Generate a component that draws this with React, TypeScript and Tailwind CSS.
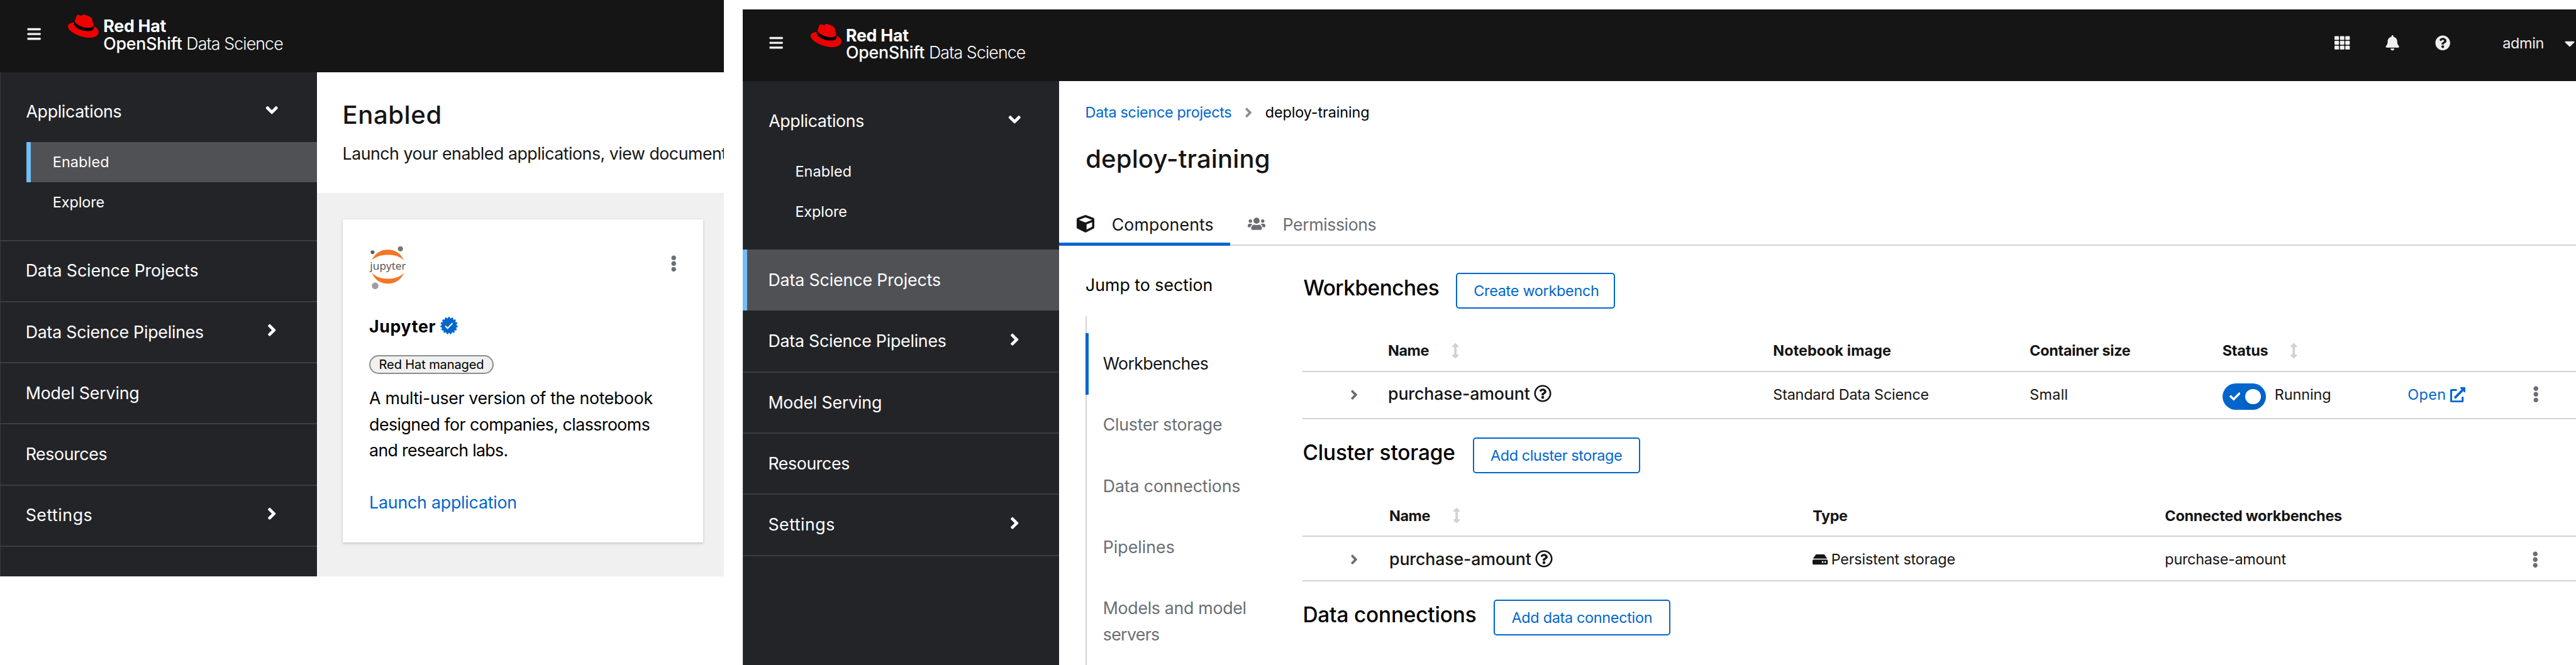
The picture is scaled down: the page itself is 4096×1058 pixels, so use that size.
import type { ReactNode } from "react";
import {
  FaAngleDown,
  FaAngleRight,
  FaArrowsAltV,
  FaBars,
  FaBell,
  FaCaretDown,
  FaCheck,
  FaCube,
  FaEllipsisV,
  FaExternalLinkAlt,
  FaHdd,
  FaQuestionCircle,
  FaRegQuestionCircle,
  FaTh,
  FaUsers,
} from "react-icons/fa";

/* ---------- Brand drawings ---------- */

function Fedora() {
  return (
    <svg viewBox="0 62 512 388" className="h-[37px] w-[48.9px] shrink-0">
      <path
        fill="#000"
        d="M429 254.84c4.65 22 4.65 24.35 4.65 27.25 0 37.66-42.33 58.56-98 58.56-125.74.08-235.91-73.65-235.91-122.33a49.55 49.55 0 0 1 4.06-19.72L113 178l311 60z"
      />
      <path
        fill="#e00"
        d="M341.52 285.56c33.65 0 82.34-6.94 82.34-47 .22-6.74.86-1.82-20.88-96.24-4.62-19.15-8.68-27.84-42.31-44.65-26.09-13.34-82.92-35.37-99.73-35.37-15.66 0-20.2 20.17-38.87 20.17-18 0-31.31-15.06-48.12-15.06-16.14 0-26.66 11-34.78 33.62-27.5 77.55-26.28 74.27-26.12 78.27 0 24.8 97.64 106.11 228.47 106.11M429 254.84c4.65 22 4.65 24.35 4.65 27.25 0 37.66-42.33 58.56-98 58.56-125.74.08-235.91-73.65-235.91-122.33a49.55 49.55 0 0 1 4.06-19.72C58.56 200.86 0 208.93 0 260.63c0 84.67 200.63 189 359.49 189 121.79 0 152.51-55.08 152.51-98.57 0-34.21-29.59-73.05-82.93-96.24"
      />
    </svg>
  );
}

function JupyterLogo() {
  return (
    <svg viewBox="0 0 70 80" className="h-[69.5px] w-[60.8px] overflow-visible">
      <path fill="#f37726" d="M5 27C10 14 21 7.3 34.3 7.3S58.5 14 63.5 27C57 19.5 46 16.8 34.3 16.8S12 19.5 5 27Z" />
      <path fill="#f37726" d="M5 49.4C10 62.4 21 69.4 34.3 69.4S58.5 62.4 63.5 49.4C57 57 46 60.3 34.3 60.3S12 57 5 49.4Z" />
      <circle cx="6.2" cy="11.9" r="3.5" fill="#616262" />
      <circle cx="57.2" cy="5.6" r="4.8" fill="#767677" />
      <circle cx="11" cy="73.4" r="6.1" fill="#9e9e9e" />
      <text
        x="1.6"
        y="43.7"
        fontSize="19"
        textLength="66"
        lengthAdjust="spacingAndGlyphs"
        fill="#4e4e4e"
        fontFamily="Open Sans, sans-serif"
      >
        jupyter
      </text>
    </svg>
  );
}

const BADGE_TEETH = 15;
const badgePoints = Array.from({ length: BADGE_TEETH * 4 }, (_, i) => {
  const radius = i % 4 < 2 ? 15.4 : 12.9;
  const angle = ((i - 0.5) / (BADGE_TEETH * 4)) * Math.PI * 2 - Math.PI / 2;
  return `${16 + radius * Math.cos(angle)},${16 + radius * Math.sin(angle)}`;
}).join(" ");

function VerifiedBadge() {
  return (
    <svg viewBox="0 0 32 32" className="mb-[3px] size-[28px] shrink-0">
      <polygon points={badgePoints} fill="#06c" stroke="#06c" strokeWidth="1" strokeLinejoin="round" />
      <path d="M9.2 16.6l4.2 4.2 8.8-9.2" fill="none" stroke="#fff" strokeWidth="2.4" />
    </svg>
  );
}

function BrandHeader({ children }: { children?: ReactNode }) {
  return (
    <div className="flex h-full items-start overflow-hidden bg-[#151515] pl-[41.7px] text-[#f0f0f0]">
      <FaBars className="mt-[41.6px] text-[24.3px]" />
      <div className="ml-[42px] mt-[22.8px]">
        <Fedora />
      </div>
      <div className="ml-[7.4px] pt-[27.9px] text-[26.75px] leading-[27.7px] text-white">
        <div className="font-bold tracking-[-0.0103em]">Red Hat</div>
        <div className="flex">
          <span className="w-[132px] font-medium tracking-[-0.0081em]">OpenShift</span>
          <span className="font-light tracking-[-0.0329em]">Data Science</span>
        </div>
      </div>
      {children}
    </div>
  );
}

/* ---------- Sidebar ---------- */

function SubItem({ active, children }: { active?: boolean; children: ReactNode }) {
  return (
    <div
      className={
        "ml-[41.7px] flex h-[64.25px] items-center pl-[42px] text-[23.4px] " +
        (active ? "bg-[#505155] shadow-[inset_7px_0_0_#73bcf7]" : "")
      }
    >
      {children}
    </div>
  );
}

function NavItem({ state, arrow, children }: { state?: "active" | "plain"; arrow?: boolean; children: ReactNode }) {
  const look =
    state === "active"
      ? "bg-[#505155] shadow-[inset_7px_0_0_#73bcf7]"
      : state === "plain"
        ? ""
        : "shadow-[inset_0_2px_0_#3c3d42]";
  return (
    <div className={"flex h-[97.23px] items-center justify-between pl-[40.7px] pr-[56px] text-[26.75px] " + look}>
      {children}
      {arrow && <FaAngleRight className="mb-[4px] text-[30.5px]" />}
    </div>
  );
}

function Sidebar({ page }: { page: "enabled" | "projects" }) {
  const onProjects = page === "projects";
  return (
    <nav className="w-[503.5px] shrink-0 whitespace-nowrap bg-[#232428] pt-[13.9px] text-white shadow-[inset_1px_0_0_#38393d]">
      <div className="flex h-[97.2px] items-center justify-between pl-[41.5px] pr-[56px] text-[26.75px]">
        <span className="tracking-[-0.0127em]">Applications</span>
        <FaAngleDown className="mb-[3px] text-[30.5px]" />
      </div>
      <SubItem active={!onProjects}>
        <span className="tracking-[0.0059em]">Enabled</span>
      </SubItem>
      <SubItem>
        <span className="tracking-[-0.0028em]">Explore</span>
      </SubItem>
      <div className="h-[27.6px]" />
      <NavItem state={onProjects ? "active" : undefined}>
        <span className="tracking-[-0.0044em]">Data Science Projects</span>
      </NavItem>
      <NavItem arrow state={onProjects ? "plain" : undefined}>
        <span className="tracking-[-0.0088em]">Data Science Pipelines</span>
      </NavItem>
      <NavItem>
        <span className="tracking-[-0.0066em]">Model Serving</span>
      </NavItem>
      <NavItem>
        <span className="tracking-[-0.0147em]">Resources</span>
      </NavItem>
      <NavItem arrow>
        <span className="tracking-[0.0193em]">Settings</span>
      </NavItem>
      <div className="h-[2px] bg-[#3c3d42]" />
    </nav>
  );
}

/* ---------- Enabled applications window ---------- */

function JupyterCard() {
  return (
    <article className="flex h-[514.3px] w-[573px] flex-col items-start whitespace-nowrap bg-white pl-[42px] pr-[33.5px] pt-[42px] text-black shadow-[0_2px_4px_rgba(3,3,3,0.14),0_0_4px_rgba(3,3,3,0.08)]">
      <div className="flex w-full items-start justify-between">
        <JupyterLogo />
        <FaEllipsisV className="mt-[15.4px] text-[26.5px] text-[#6a6e73]" />
      </div>
      <div className="mt-[38.6px] flex h-[41.7px] items-center gap-[7px] text-[26.75px] font-bold">
        <span className="tracking-[0.023em]">Jupyter</span>
        <VerifiedBadge />
      </div>
      <div className="mt-[24.5px] flex h-[30.5px] w-[198px] items-center rounded-full border-2 border-[#8a8d90] bg-[#f0f0f0] pl-[13.5px] text-[20.1px] tracking-[-0.0073em]">
        Red Hat managed
      </div>
      <div className="mt-[17.5px] text-[26.75px] leading-[41.67px]">
        <p className="tracking-[-0.0129em]">A multi-user version of the notebook</p>
        <p className="tracking-[-0.0206em]">designed for companies, classrooms</p>
        <p className="tracking-[-0.0261em]">and research labs.</p>
      </div>
      <a className="mt-[41.6px] text-[26.75px] leading-[41.67px] tracking-[-0.0083em] text-[#06c]">
        Launch application
      </a>
    </article>
  );
}

function EnabledWindow() {
  return (
    <section className="flex h-[916.8px] w-[1151px] shrink-0 flex-col overflow-hidden">
      <header className="h-[114.6px] shrink-0">
        <BrandHeader />
      </header>
      <div className="flex flex-1">
        <Sidebar page="enabled" />
        <main className="flex min-w-0 flex-1 flex-col bg-[#f0f0f0]">
          <div className="h-[192.7px] overflow-hidden whitespace-nowrap bg-white pl-[41px] pt-[41.4px] text-[#151515]">
            <h1 className="text-[40.1px] font-medium leading-[54px] tracking-[0.0144em]">Enabled</h1>
            <p className="mt-[14px] text-[26.75px] leading-[41.7px] tracking-[-0.0182em]">
              Launch your enabled applications, view document
            </p>
          </div>
          <div className="pl-[41.6px] pt-[41.3px]">
            <JupyterCard />
          </div>
        </main>
      </div>
    </section>
  );
}

/* ---------- Project details window ---------- */

function Toolbar() {
  return (
    <div className="-mr-[2.6px] ml-auto flex h-[107.6px] shrink-0 items-center text-[24.3px]">
      <FaTh />
      <FaBell className="ml-[55.6px]" />
      <FaQuestionCircle className="ml-[55.6px]" />
      <span className="ml-[82.8px] text-[23.4px] tracking-[-0.0137em]">admin</span>
      <FaCaretDown className="ml-[27.6px] text-[26px]" />
    </div>
  );
}

function JumpLink({ active, children }: { active?: boolean; children: ReactNode }) {
  return (
    <li
      className={
        "py-[27.8px] pl-[27.9px] " + (active ? "text-[#151515] shadow-[inset_5px_0_0_#06c]" : "text-[#6a6e73]")
      }
    >
      {children}
    </li>
  );
}

function JumpLinks() {
  return (
    <aside className="flex w-[345.5px] shrink-0 flex-col whitespace-nowrap pt-[41.6px] text-[26.75px] leading-[41.67px]">
      <h2 className="tracking-[-0.0002em] text-black">Jump to section</h2>
      <ul className="mt-[27.8px] flex-1 pt-[27.8px] shadow-[inset_2px_0_0_#d2d2d2]">
        <JumpLink active>
          <span className="tracking-[-0.0255em]">Workbenches</span>
        </JumpLink>
        <JumpLink>
          <span className="tracking-[-0.0095em]">Cluster storage</span>
        </JumpLink>
        <JumpLink>
          <span className="tracking-[-0.0052em]">Data connections</span>
        </JumpLink>
        <JumpLink>
          <span className="tracking-[-0.0001em]">Pipelines</span>
        </JumpLink>
        <JumpLink>
          <span className="block tracking-[-0.0117em]">Models and model</span>
          <span className="block tracking-[-0.0255em]">servers</span>
        </JumpLink>
      </ul>
    </aside>
  );
}

function SectionHeading({ title, action }: { title: ReactNode; action: ReactNode }) {
  return (
    <div className="flex h-[57.3px] items-start">
      <h2 className="text-[33.4px] font-medium leading-[49.6px] text-black">{title}</h2>
      <button className="flex h-full items-center justify-center whitespace-nowrap rounded-[5px] border-2 border-[#06c] text-[23.4px] text-[#06c]">
        {action}
      </button>
    </div>
  );
}

function SortIcon() {
  return <FaArrowsAltV className="text-[24.3px] text-[#d2d2d2]" />;
}

function RowToggle() {
  return (
    <div className="pl-[69.4px]">
      <FaAngleRight className="text-[24.3px] text-[#6a6e73]" />
    </div>
  );
}

function PurchaseName() {
  return (
    <div className="flex items-center gap-[6px] pb-[2.5px] text-[26.75px] font-medium tracking-[-0.0063em]">
      purchase-amount
      <FaRegQuestionCircle className="text-[28px]" />
    </div>
  );
}

function RunningSwitch() {
  return (
    <div className="flex h-[41.7px] w-[69.5px] items-center rounded-full bg-[#06c] pl-[11px]">
      <FaCheck className="text-[17.6px] text-white" />
      <span className="ml-[8.2px] size-[24.3px] rounded-full bg-white shadow-[0_7px_14px_rgba(3,3,3,0.14)]" />
    </div>
  );
}

const line = "shadow-[inset_0_-2px_0_#d2d2d2] ";
const workbenchCols =
  "grid grid-cols-[135.7px_612.3px_408px_306.3px_294.7px_191.1px_1fr] items-center whitespace-nowrap text-[23.4px] text-[#151515] ";
const storageCols =
  "grid grid-cols-[137.7px_673.3px_560px_575.2px_1fr] items-center whitespace-nowrap text-[23.4px] text-[#151515] ";

function WorkbenchTable() {
  return (
    <div>
      <div className={workbenchCols + line + "mt-[32.6px] h-[68.1px] font-bold"}>
        <span />
        <div className="flex items-center">
          <span className="w-[95px] tracking-[-0.019em]">Name</span>
          <SortIcon />
        </div>
        <span className="tracking-[0.002em]">Notebook image</span>
        <span className="tracking-[-0.014em]">Container size</span>
        <div className="flex items-center">
          <span className="w-[101px] tracking-[-0.0067em]">Status</span>
          <SortIcon />
        </div>
      </div>
      <div className={workbenchCols + line + "h-[75.4px] pb-[4px]"}>
        <RowToggle />
        <PurchaseName />
        <span className="tracking-[-0.0099em]">Standard Data Science</span>
        <span className="tracking-[0.0093em]">Small</span>
        <div className="flex items-center">
          <div className="mt-[6.8px]">
            <RunningSwitch />
          </div>
          <span className="ml-[13.6px] tracking-[-0.0038em]">Running</span>
        </div>
        <a className="flex items-center gap-[6.5px] text-[#06c]">
          <span className="tracking-[0.0145em]">Open</span>
          <FaExternalLinkAlt className="text-[24.3px]" />
        </a>
        <FaEllipsisV className="text-[26.5px] text-[#6a6e73]" />
      </div>
    </div>
  );
}

function StorageTable() {
  return (
    <div>
      <div className={storageCols + line + "mt-[32.9px] h-[68px] font-bold"}>
        <span />
        <div className="flex items-center">
          <span className="w-[95px] tracking-[-0.019em]">Name</span>
          <SortIcon />
        </div>
        <span className="tracking-[-0.0202em]">Type</span>
        <span className="tracking-[-0.011em]">Connected workbenches</span>
      </div>
      <div className={storageCols + line + "h-[71.1px]"}>
        <RowToggle />
        <PurchaseName />
        <div className="flex items-center gap-[5px]">
          <FaHdd className="text-[24.3px]" />
          <span className="tracking-[-0.0077em]">Persistent storage</span>
        </div>
        <span className="tracking-[-0.0119em]">purchase-amount</span>
        <FaEllipsisV className="text-[26.5px] text-[#6a6e73]" />
      </div>
    </div>
  );
}

function ProjectContent() {
  return (
    <div className="min-w-0 flex-1 pt-[42.6px]">
      <SectionHeading
        title={<span className="block w-[243.8px] pl-[1px] tracking-[-0.0152em]">Workbenches</span>}
        action={<span className="w-[249.3px] pl-[26px] text-left tracking-[-0.0117em]">Create workbench</span>}
      />
      <WorkbenchTable />
      <div className="mt-[28.7px]">
        <SectionHeading
          title={<span className="block w-[270.2px] tracking-[-0.0046em]">Cluster storage</span>}
          action={<span className="w-[262.2px] tracking-[-0.0167em]">Add cluster storage</span>}
        />
      </div>
      <StorageTable />
      <div className="mt-[28.7px]">
        <SectionHeading
          title={<span className="block w-[303.8px] tracking-[-0.0054em]">Data connections</span>}
          action={<span className="w-[276.4px] tracking-[-0.013em]">Add data connection</span>}
        />
      </div>
    </div>
  );
}

function ProjectWindow() {
  return (
    <section className="ml-[29.7px] mt-[14.8px] flex min-w-0 flex-1 flex-col overflow-hidden">
      <header className="h-[114.6px] shrink-0">
        <BrandHeader>
          <Toolbar />
        </BrandHeader>
      </header>
      <div className="flex min-h-0 flex-1">
        <Sidebar page="projects" />
        <main className="flex min-w-0 flex-1 flex-col whitespace-nowrap">
          <div className="flex items-center pl-[41.4px] pt-[31.6px] text-[23.4px] leading-[36.5px]">
            <a className="tracking-[-0.0128em] text-[#06c]">Data science projects</a>
            <FaAngleRight className="ml-[15px] text-[24.3px] text-[#8a8d90]" />
            <span className="ml-[14px] tracking-[-0.0048em] text-black">deploy-training</span>
          </div>
          <h1 className="mt-[28.5px] pl-[42px] text-[40.1px] font-medium leading-[54px] tracking-[0.0031em] text-[#151515]">
            deploy-training
          </h1>
          <div className="mt-[41.7px] flex h-[69.8px] shrink-0 text-[26.75px] shadow-[inset_0_-2px_0_#d2d2d2]">
            <div className="flex w-[271.7px] items-center pl-[27.5px] text-[#151515] shadow-[inset_0_-5px_0_#06c]">
              <FaCube className="mb-[2px] text-[28px]" />
              <span className="ml-[28px] tracking-[0.0033em]">Components</span>
            </div>
            <div className="flex items-center pl-[27.7px] text-[#6a6e73]">
              <FaUsers className="mb-[2px] text-[28px]" />
              <span className="ml-[28px] tracking-[-0.0167em]">Permissions</span>
            </div>
          </div>
          <div className="flex min-h-0 flex-1 pl-[41.7px]">
            <JumpLinks />
            <ProjectContent />
          </div>
        </main>
      </div>
    </section>
  );
}

export default function App() {
  return (
    <div className="flex h-[1058px] w-[4096px] items-start overflow-hidden bg-white font-['Inter',sans-serif]">
      <EnabledWindow />
      <div className="flex h-full min-w-0 flex-1">
        <ProjectWindow />
      </div>
    </div>
  );
}
